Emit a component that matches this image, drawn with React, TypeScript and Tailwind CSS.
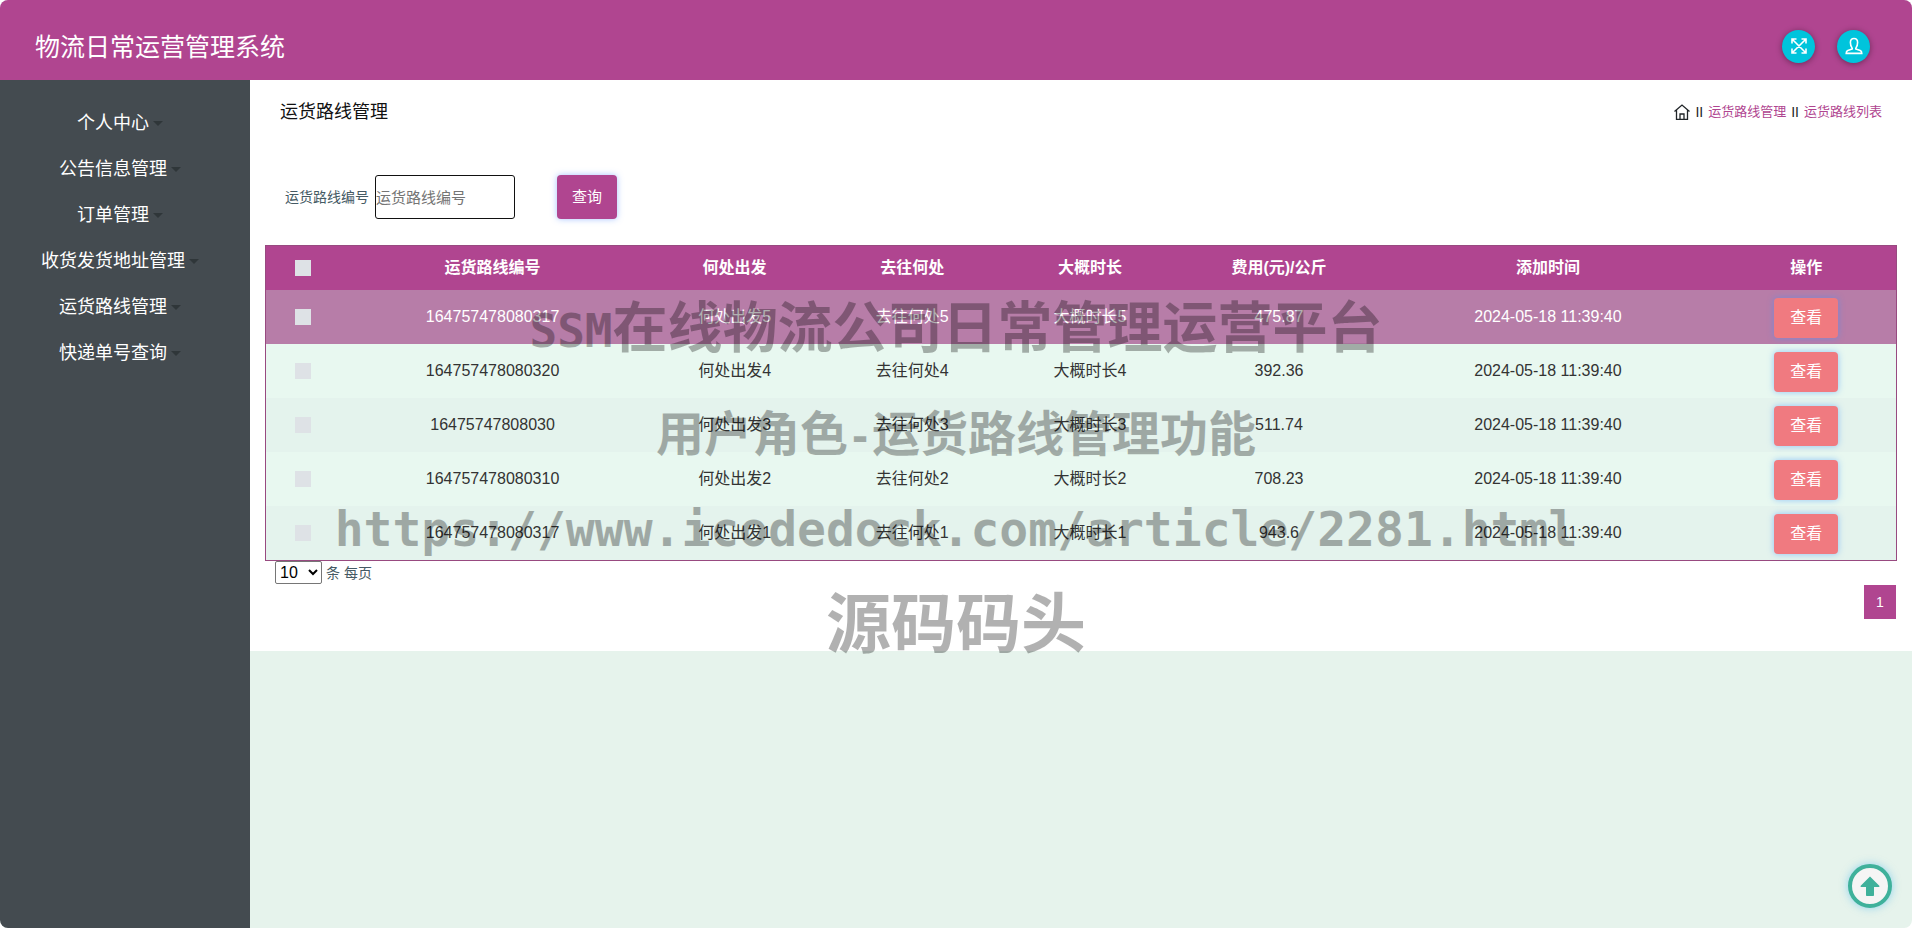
import type { ReactNode } from 'react'

type Route = {
  code: string
  from: string
  to: string
  duration: string
  price: string
  createdAt: string
}

const MENU = [
  '个人中心',
  '公告信息管理',
  '订单管理',
  '收货发货地址管理',
  '运货路线管理',
  '快递单号查询',
]

const HEADERS = [
  '运货路线编号',
  '何处出发',
  '去往何处',
  '大概时长',
  '费用(元)/公斤',
  '添加时间',
  '操作',
]

const CREATED_AT = '2024-05-18 11:39:40'

const ROUTES: Route[] = [
  { code: '164757478080317', from: '何处出发5', to: '去往何处5', duration: '大概时长5', price: '475.87', createdAt: CREATED_AT },
  { code: '164757478080320', from: '何处出发4', to: '去往何处4', duration: '大概时长4', price: '392.36', createdAt: CREATED_AT },
  { code: '16475747808030', from: '何处出发3', to: '去往何处3', duration: '大概时长3', price: '511.74', createdAt: CREATED_AT },
  { code: '164757478080310', from: '何处出发2', to: '去往何处2', duration: '大概时长2', price: '708.23', createdAt: CREATED_AT },
  { code: '164757478080317', from: '何处出发1', to: '去往何处1', duration: '大概时长1', price: '943.6', createdAt: CREATED_AT },
]

function rowClass(index: number) {
  if (index === 0) return 'bg-[#b77da8] text-white'
  return index % 2 === 1
    ? 'bg-[#e8f8f0] text-[#333333]'
    : 'bg-[#e4f3ed] text-[#333333]'
}

function FullscreenIcon() {
  return (
    <svg viewBox="0 0 16 16" className="size-4" fill="none" stroke="currentColor" strokeWidth="1.6" aria-hidden="true">
      <path d="M1.500 1.500l13 13M14.500 1.500l-13 13M1 5.500V1h4.500M10.500 1H15v4.500M15 10.500V15h-4.500M5.500 15H1v-4.500" />
    </svg>
  )
}

function UserIcon() {
  return (
    <svg viewBox="0 0 18 18" className="size-[18px]" fill="none" stroke="currentColor" strokeWidth="1.6" aria-hidden="true">
      <path d="M7.200 11.200C5.900 9.800 5.400 8 5.400 5.600c0-2.600 1.300-4.100 3.600-4.100s3.600 1.500 3.600 4.100c0 2.400-.5 4.200-1.800 5.600v.8l4.400 1.500c1 .4 1.600 1.400 1.600 2.900H1.200c0-1.500.6-2.500 1.600-2.900L7.200 12z" />
    </svg>
  )
}

function HomeIcon() {
  return (
    <svg viewBox="0 0 16 16" className="size-4" fill="none" stroke="currentColor" strokeWidth="1.300" aria-hidden="true">
      <path d="M.5 7.500L8 1l7.500 6.500M2.500 6v9.300h11V6M6 15.300V10h4v5.300" />
    </svg>
  )
}

function RoundButton({ label, children }: { label: string; children: ReactNode }) {
  return (
    <button
      type="button"
      aria-label={label}
      className="flex size-[33px] items-center justify-center rounded-full bg-[#00c4dc] text-white shadow-[0_1px_6px_rgba(0,0,0,0.4)]"
    >
      {children}
    </button>
  )
}

function Checkbox({ label }: { label: string }) {
  return (
    <input
      type="checkbox"
      aria-label={label}
      className="mx-auto block size-4 appearance-none bg-[#dee2e6]"
    />
  )
}

function Watermark() {
  return (
    <div
      aria-hidden="true"
      className="pointer-events-none absolute inset-x-0 top-[288px] flex flex-col items-center font-bold whitespace-nowrap text-black opacity-30"
    >
      <p className="text-[55px] leading-20">
        <span className="font-['DejaVu_Sans_Mono',monospace] text-[46px]">SSM</span>
        在线物流公司日常管理运营平台
      </p>
      <p className="mt-6 text-5xl leading-20">
        用户角色
        <span className="font-['DejaVu_Sans_Mono',monospace] text-[40px]">-</span>
        运货路线管理功能
      </p>
      <p className="mt-3 font-['DejaVu_Sans_Mono',monospace] text-5xl leading-20">
        https://www.icodedock.com/article/2281.html
      </p>
      <p className="mt-4 text-[65px] leading-20">源码码头</p>
    </div>
  )
}

export default function App() {
  return (
    <div className="relative flex min-h-screen flex-col overflow-hidden rounded-lg bg-[#e6f3ec] font-['Liberation_Sans','Noto_Sans_CJK_SC',sans-serif] text-base text-[#333333]">
      <header className="flex h-20 items-center justify-between bg-[#b04590] pt-4 pr-[42px] pl-[35px]">
        <h1 className="text-[25px] text-white">物流日常运营管理系统</h1>
        <div className="flex gap-[22px] pb-1">
          <RoundButton label="全屏">
            <FullscreenIcon />
          </RoundButton>
          <RoundButton label="个人中心">
            <UserIcon />
          </RoundButton>
        </div>
      </header>

      <div className="flex flex-1">
        <nav className="w-[250px] shrink-0 bg-[#444b50] pt-5 pr-[10px]">
          <ul>
            {MENU.map((item) => (
              <li key={item}>
                <a href="#" className="flex h-[46px] items-center justify-center gap-1 text-lg text-white">
                  {item}
                  <span className="border-x-[5px] border-t-[5px] border-x-transparent border-t-[#2f3639]" />
                </a>
              </li>
            ))}
          </ul>
        </nav>

        <div className="min-w-0 flex-1">
          <main className="bg-white px-[15px] pb-8">
            <div className="flex h-16 items-center justify-between px-[15px]">
              <h2 className="text-lg text-[#111111]">运货路线管理</h2>
              <div className="flex items-center gap-[5px] text-[13px] text-[#212529]">
                <a href="#" aria-label="首页">
                  <HomeIcon />
                </a>
                <span className="text-sm">II</span>
                <a href="#" className="text-[#b04590]">运货路线管理</a>
                <span className="text-sm">II</span>
                <a href="#" className="text-[#b04590]">运货路线列表</a>
              </div>
            </div>

            <form className="mt-[31px] flex items-center px-5" onSubmit={(e) => e.preventDefault()}>
              <label htmlFor="route-code" className="text-sm text-[#455a64]">
                运货路线编号
              </label>
              <input
                id="route-code"
                type="text"
                placeholder="运货路线编号"
                className="ml-[6px] h-11 w-[140px] rounded-[3px] border border-[#111111] text-[15px] placeholder:text-[#757575]"
              />
              <button
                type="submit"
                className="ml-[42px] h-11 w-[60px] rounded-[4px] bg-[#b04590] text-[15px] text-white shadow-[0_0_6px_rgba(80,140,255,0.5)]"
              >
                查询
              </button>
            </form>

            <table className="mt-[26px] w-full table-fixed border-separate border-spacing-0 border border-[#984a80] text-center">
              <colgroup>
                <col className="w-[4.5%]" />
                <col className="w-[18.8%]" />
                <col className="w-[10.9%]" />
                <col className="w-[10.9%]" />
                <col className="w-[10.9%]" />
                <col className="w-[12.3%]" />
                <col className="w-[20.7%]" />
                <col className="w-[11%]" />
              </colgroup>
              <thead className="bg-[#b04590] text-white">
                <tr className="h-11">
                  <th>
                    <Checkbox label="全选" />
                  </th>
                  {HEADERS.map((header) => (
                    <th key={header}>{header}</th>
                  ))}
                </tr>
              </thead>
              <tbody>
                {ROUTES.map((route, index) => (
                  <tr key={route.from} className={`h-[54px] ${rowClass(index)}`}>
                    <td>
                      <Checkbox label={`选择 ${route.code}`} />
                    </td>
                    <td>{route.code}</td>
                    <td>{route.from}</td>
                    <td>{route.to}</td>
                    <td>{route.duration}</td>
                    <td>{route.price}</td>
                    <td>{route.createdAt}</td>
                    <td className="pt-[2px]">
                      <button
                        type="button"
                        className="h-10 w-16 rounded-[4px] bg-[#f07a80] align-middle text-white shadow-[0_0_6px_rgba(60,150,255,0.5)]"
                      >
                        查看
                      </button>
                    </td>
                  </tr>
                ))}
              </tbody>
            </table>

            <div className="flex items-center gap-1 pb-px pl-[10px] text-sm text-[#455a64]">
              <select
                id="page-size"
                defaultValue="10"
                className="h-[23px] w-[47px] rounded-[2px] border border-[#767676] bg-white text-base text-black"
              >
                <option>10</option>
                <option>20</option>
                <option>50</option>
              </select>
              <label htmlFor="page-size">条 每页</label>
            </div>

            <div className="flex justify-end pr-px">
              <button type="button" className="h-[34px] w-8 bg-[#b04590] text-sm text-white">
                1
              </button>
            </div>
          </main>
        </div>
      </div>

      <Watermark />

      <button
        type="button"
        aria-label="返回顶部"
        className="absolute right-5 bottom-5 flex size-11 items-center justify-center rounded-full border-4 border-[#3fb19b] bg-[#f5f5f5] text-[#3fb19b] shadow-[0_0_8px_rgba(60,180,240,0.5)]"
      >
        <svg viewBox="0 0 20 20" className="size-5" fill="currentColor" aria-hidden="true">
          <path d="M10 .5l9.300 9.300c.4.500.2 1.200-.5 1.200H14v8c0 .6-.4 1-1 1H7c-.6 0-1-.4-1-1v-8H1.200c-.7 0-.9-.7-.5-1.200z" />
        </svg>
      </button>
    </div>
  )
}
